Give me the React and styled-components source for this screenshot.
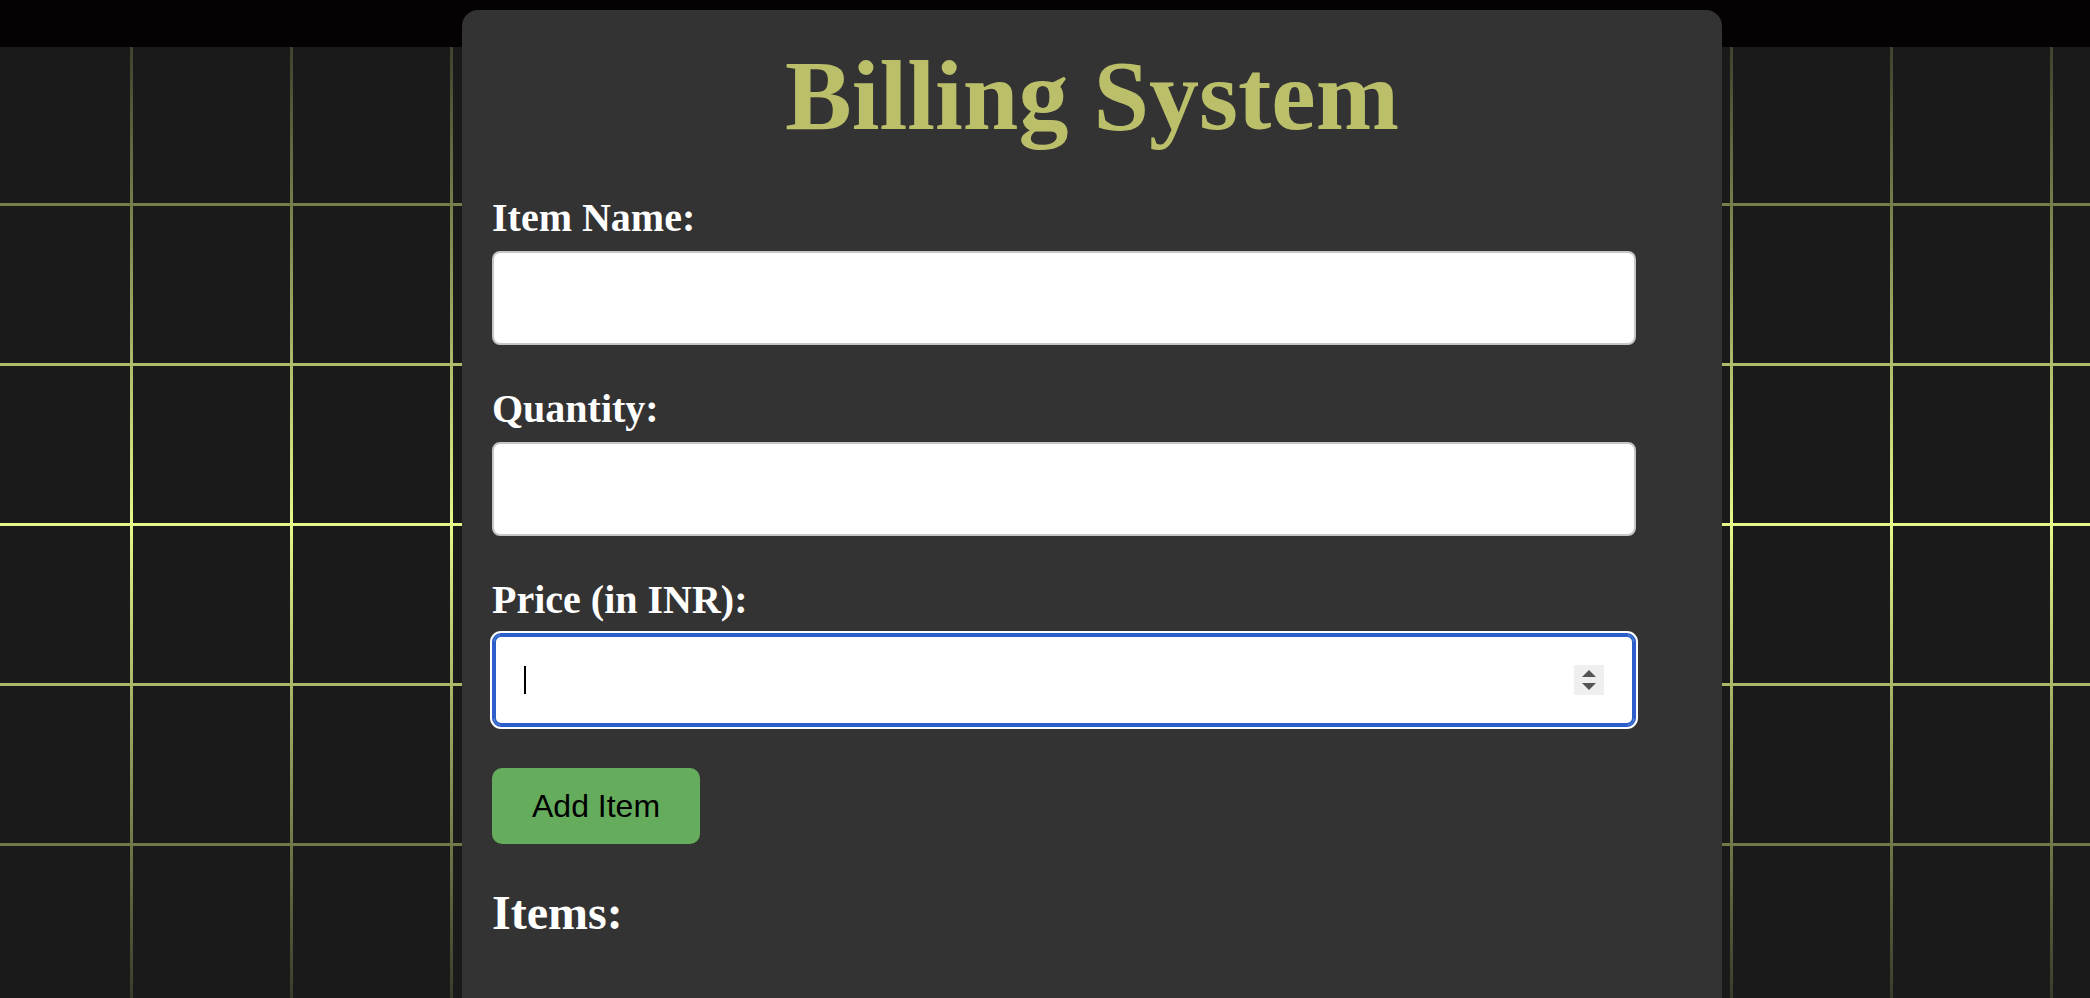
import React from 'react';
import styled, { createGlobalStyle, css } from 'styled-components';

const GlobalStyle = createGlobalStyle`
  html, body {
    margin: 0;
    padding: 0;
    overflow: hidden;
  }
  body {
    background: #1a1a1a;
  }
`;

const Page = styled.div`
  position: relative;
  box-sizing: border-box;
  height: 100vh;
  overflow: hidden;
  display: flex;
  justify-content: center;
  align-items: flex-start;
  padding-left: 94px;
  background: linear-gradient(#040202 0 47px, #1a1a1a 47px);
  font-family: "Liberation Serif", "Times New Roman", serif;

  &::before {
    content: "";
    position: absolute;
    left: 0;
    right: 0;
    top: 47px;
    bottom: 0;
    background-image:
      linear-gradient(to right, rgb(232, 248, 136) 3px, transparent 3px),
      linear-gradient(to bottom, rgb(232, 248, 136) 3px, transparent 3px);
    background-size: 160px 160px, 160px 160px;
    background-position: 130px 0, 0 156px;
    -webkit-mask-image: linear-gradient(to bottom, rgba(0, 0, 0, 0.18), #000 50%, rgba(0, 0, 0, 0.15));
    mask-image: linear-gradient(to bottom, rgba(0, 0, 0, 0.18), #000 50%, rgba(0, 0, 0, 0.15));
  }
`;

const Card = styled.main`
  position: relative;
  z-index: 1;
  box-sizing: border-box;
  width: 1260px;
  min-height: 1200px;
  margin-top: 10px;
  padding: 28px 30px;
  background: #333333;
  border-radius: 16px;
  display: flex;
  flex-direction: column;
  gap: 41px;
`;

const Title = styled.h1`
  margin: 0;
  font-size: 100px;
  line-height: 116px;
  font-weight: 700;
  color: #bcbf6a;
  text-align: center;
`;

const Field = styled.div`
  display: flex;
  flex-direction: column;
  gap: 10px;
`;

const Label = styled.label`
  display: block;
  font-size: 40px;
  line-height: 46px;
  font-weight: 700;
  color: #ffffff;
`;

const InputWrap = styled.div`
  position: relative;
  width: 1144px;
`;

const Input = styled.input`
  box-sizing: border-box;
  display: block;
  width: 1144px;
  height: 94px;
  margin: 0;
  padding: 0 30px;
  border: 2px solid #c6c6c6;
  border-radius: 8px;
  background: #ffffff;
  color: #000;
  font: 32px "Liberation Sans", Arial, sans-serif;
  outline: none;
  -moz-appearance: textfield;

  &::-webkit-inner-spin-button,
  &::-webkit-outer-spin-button {
    -webkit-appearance: none;
    margin: 0;
  }

  ${(p) =>
    p.$focused &&
    css`
      border-color: #2c5fca;
      border-radius: 9px;
      box-shadow: inset 0 0 0 2px #2c5fca, 0 0 0 2px #ffffff;
    `}
`;

const Caret = styled.span`
  position: absolute;
  left: 32px;
  top: 50%;
  width: 2px;
  height: 28px;
  margin-top: -14px;
  background: #000;
  pointer-events: none;
`;

const Spinner = styled.svg`
  position: absolute;
  right: 32px;
  top: 50%;
  width: 30px;
  height: 30px;
  margin-top: -15px;
  pointer-events: none;
`;

const AddButton = styled.button`
  align-self: flex-start;
  margin: 0;
  padding: 20px 40px;
  border: none;
  border-radius: 10px;
  background: #65ac5d;
  color: #000;
  font: 32px/36px "Liberation Sans", Arial, sans-serif;
  cursor: pointer;
`;

const SectionTitle = styled.h2`
  margin: 0;
  font-size: 48px;
  line-height: 55px;
  font-weight: 700;
  color: #ffffff;
`;

const ItemList = styled.ul`
  margin: 0;
  padding: 0;
  list-style: none;
`;

export default function App() {
  return (
    <>
      <GlobalStyle />
      <Page>
        <Card>
          <Title>Billing System</Title>
          <Field>
            <Label htmlFor="item-name">Item Name:</Label>
            <Input id="item-name" type="text" />
          </Field>
          <Field>
            <Label htmlFor="quantity">Quantity:</Label>
            <Input id="quantity" type="number" />
          </Field>
          <Field>
            <Label htmlFor="price">Price (in INR):</Label>
            <InputWrap>
              <Input id="price" type="number" $focused />
              <Caret aria-hidden="true" />
              <Spinner viewBox="0 0 30 30" aria-hidden="true">
                <rect width="30" height="30" fill="#efefef" />
                <polygon points="8,12 22,12 15,5" fill="#555555" />
                <polygon points="8,18 22,18 15,25" fill="#555555" />
              </Spinner>
            </InputWrap>
          </Field>
          <AddButton type="button">Add Item</AddButton>
          <SectionTitle>Items:</SectionTitle>
          <ItemList />
        </Card>
      </Page>
    </>
  );
}
